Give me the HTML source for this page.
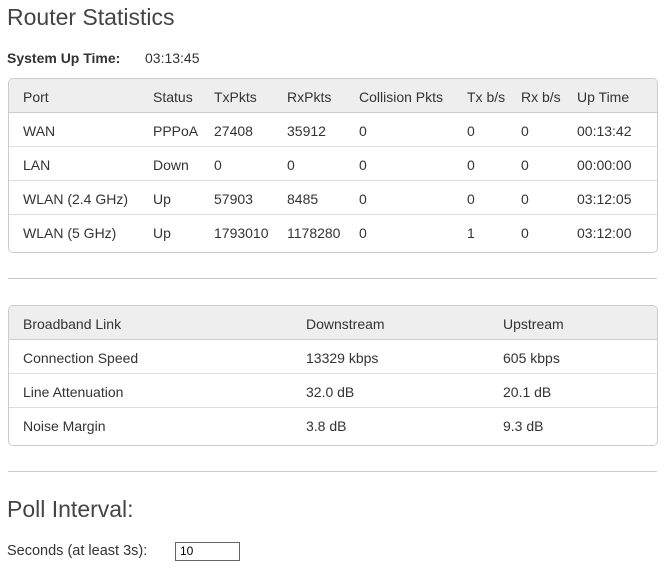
<!DOCTYPE html>
<html><head><style>
body{margin:0;width:667px;height:571px;background:#fff;font-family:"Liberation Sans",sans-serif;color:#333;position:relative;overflow:hidden}
.a{position:absolute;white-space:nowrap}
.t{font-size:14px;line-height:16px}
.box{position:absolute;left:8px;width:648px;border:1px solid #ccc;border-radius:5px;overflow:hidden}
.hd{position:absolute;left:0;right:0;top:0;background:#eee;border-bottom:1px solid #ccc}
.rl{position:absolute;left:0;right:0;height:1px;background:#ddd}
.hr{position:absolute;left:8px;width:649px;height:1px;background:#ccc}
</style></head><body>
<div class="a" style="left:7px;top:4px;font-size:23px;color:#444">Router Statistics</div>
<div class="a t" style="left:7px;top:50px;font-weight:bold;font-size:14px">System Up Time:</div>
<div class="a t" style="left:145px;top:50px">03:13:45</div>

<div class="box" style="top:78px;height:173px">
<div class="hd" style="height:33px"></div>
<div class="rl" style="top:67px"></div>
<div class="rl" style="top:101px"></div>
<div class="rl" style="top:135px"></div>
</div>
<div class="a t" style="left:23px;top:89px">Port</div><div class="a t" style="left:153px;top:89px">Status</div><div class="a t" style="left:214px;top:89px">TxPkts</div><div class="a t" style="left:287px;top:89px">RxPkts</div><div class="a t" style="left:359px;top:89px">Collision Pkts</div><div class="a t" style="left:467px;top:89px">Tx b/s</div><div class="a t" style="left:521px;top:89px">Rx b/s</div><div class="a t" style="left:577px;top:89px">Up Time</div>

<div class="a t" style="left:23px;top:123px">WAN</div><div class="a t" style="left:153px;top:123px">PPPoA</div><div class="a t" style="left:214px;top:123px">27408</div><div class="a t" style="left:287px;top:123px">35912</div><div class="a t" style="left:359px;top:123px">0</div><div class="a t" style="left:467px;top:123px">0</div><div class="a t" style="left:521px;top:123px">0</div><div class="a t" style="left:577px;top:123px">00:13:42</div>

<div class="a t" style="left:23px;top:157px">LAN</div><div class="a t" style="left:153px;top:157px">Down</div><div class="a t" style="left:214px;top:157px">0</div><div class="a t" style="left:287px;top:157px">0</div><div class="a t" style="left:359px;top:157px">0</div><div class="a t" style="left:467px;top:157px">0</div><div class="a t" style="left:521px;top:157px">0</div><div class="a t" style="left:577px;top:157px">00:00:00</div>

<div class="a t" style="left:23px;top:191px">WLAN (2.4 GHz)</div><div class="a t" style="left:153px;top:191px">Up</div><div class="a t" style="left:214px;top:191px">57903</div><div class="a t" style="left:287px;top:191px">8485</div><div class="a t" style="left:359px;top:191px">0</div><div class="a t" style="left:467px;top:191px">0</div><div class="a t" style="left:521px;top:191px">0</div><div class="a t" style="left:577px;top:191px">03:12:05</div>

<div class="a t" style="left:23px;top:225px">WLAN (5 GHz)</div><div class="a t" style="left:153px;top:225px">Up</div><div class="a t" style="left:214px;top:225px">1793010</div><div class="a t" style="left:287px;top:225px">1178280</div><div class="a t" style="left:359px;top:225px">0</div><div class="a t" style="left:467px;top:225px">1</div><div class="a t" style="left:521px;top:225px">0</div><div class="a t" style="left:577px;top:225px">03:12:00</div>

<div class="hr" style="top:278px"></div>

<div class="box" style="top:305px;height:139px">
<div class="hd" style="height:33px"></div>
<div class="rl" style="top:67px"></div>
<div class="rl" style="top:101px"></div>
</div>
<div class="a t" style="left:23px;top:316px">Broadband Link</div><div class="a t" style="left:306px;top:316px">Downstream</div><div class="a t" style="left:503px;top:316px">Upstream</div>
<div class="a t" style="left:23px;top:350px">Connection Speed</div><div class="a t" style="left:306px;top:350px">13329 kbps</div><div class="a t" style="left:503px;top:350px">605 kbps</div>
<div class="a t" style="left:23px;top:384px">Line Attenuation</div><div class="a t" style="left:306px;top:384px">32.0 dB</div><div class="a t" style="left:503px;top:384px">20.1 dB</div>
<div class="a t" style="left:23px;top:418px">Noise Margin</div><div class="a t" style="left:306px;top:418px">3.8 dB</div><div class="a t" style="left:503px;top:418px">9.3 dB</div>

<div class="hr" style="top:471px"></div>
<div class="a" style="left:7px;top:496px;font-size:23px;color:#444">Poll Interval:</div>
<div class="a t" style="left:7px;top:543px;font-size:14.5px">Seconds (at least 3s):</div>
<div class="a" style="left:175px;top:542px;border:1px solid #666;font-size:12px;line-height:17px;color:#000;padding-left:4px;box-sizing:border-box;width:65px;height:19px">10</div>
</body></html>
